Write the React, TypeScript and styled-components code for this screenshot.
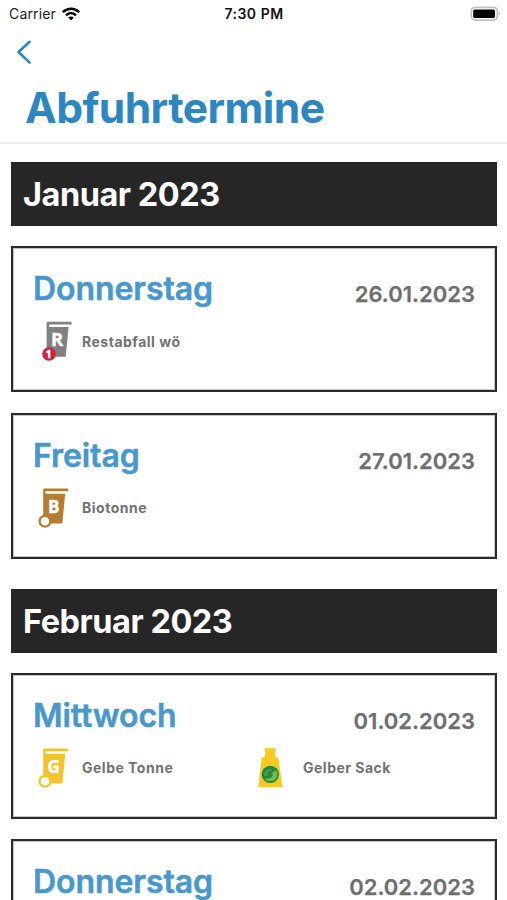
import React from "react";
import styled, { createGlobalStyle } from "styled-components";

const GlobalStyle = createGlobalStyle`
  * { box-sizing: border-box; }
  html, body { margin: 0; background: #fff; }
  body {
    height: 900px;
    overflow: hidden;
    font-family: Inter, "Liberation Sans", sans-serif;
    font-kerning: normal;
  }
  h1, h2, h3 { margin: 0; }
`;

const Screen = styled.div`
  width: 507px;
  height: 900px;
  overflow: hidden;
  background: #fff;
`;

const StatusBar = styled.div`
  display: grid;
  grid-template-columns: 1fr auto 1fr;
  align-items: center;
  height: 27px;
  padding: 0 6px 0 9px;
  color: #222;
`;

const Carrier = styled.div`
  display: flex;
  align-items: center;
  gap: 6px;
  font-size: 14px;
  letter-spacing: 0.15px;
`;

const Clock = styled.div`
  margin-left: -2px;
  font-size: 14px;
  font-weight: 600;
  letter-spacing: 0.5px;
  color: #111;
`;

const BatterySlot = styled.div`
  display: flex;
  justify-content: flex-end;
`;

const Header = styled.header`
  height: 117px;
  padding-top: 1px;
  border-bottom: 2px solid #ebebeb;
`;

const BackButton = styled.button`
  display: flex;
  align-items: center;
  height: 48px;
  padding: 0 0 0 16px;
  border: 0;
  background: none;
`;

const Title = styled.h1`
  padding-left: 25px;
  font-size: 42.5px;
  line-height: 64px;
  font-weight: 700;
  letter-spacing: -0.55px;
  color: #2b86c1;
`;

const Schedule = styled.main`
  padding: 18.4px 10px 0 11px;
`;

const Month = styled.section`
  display: flex;
  flex-direction: column;
  gap: 20.3px;
  margin-bottom: 30.1px;
`;

const MonthBanner = styled.h2`
  height: 63.6px;
  padding-left: 12px;
  background: #262626;
  color: #fff;
  font-size: 32.5px;
  line-height: 65px;
  font-weight: 700;
  letter-spacing: -0.48px;
`;

const Card = styled.article`
  height: 146.2px;
  padding: 21px 20px 0 20px;
  border: 2px solid #2b2c2c;
  box-shadow: inset 0 0 0 1px #c4c4c4;
`;

const CardHead = styled.div`
  display: flex;
  justify-content: space-between;
  height: 46px;
`;

const Weekday = styled.h3`
  font-size: 32px;
  line-height: 39px;
  font-weight: 600;
  letter-spacing: -0.08px;
  color: #4897cd;
  -webkit-text-stroke: 0.5px #4897cd;
`;

const DateText = styled.time`
  padding-top: 12px;
  font-size: 22px;
  line-height: 27px;
  font-weight: 600;
  letter-spacing: 0px;
  color: #6e6e6e;
  -webkit-text-stroke: 0.25px #6e6e6e;
`;

const Items = styled.div`
  display: grid;
  grid-template-columns: 221px 1fr;
`;

const Item = styled.div`
  display: flex;
  align-items: center;
  height: 52px;
  color: #727272;
  font-size: 14px;
  font-weight: 700;
  letter-spacing: 0.5px;

  svg { flex: none; margin-right: 3px; }
`;

const IconLetter = styled.text`
  font-family: "Open Sans", sans-serif;
  font-weight: 700;
  fill: #fff;
  stroke: #fff;
  stroke-width: 0.4px;
  text-anchor: middle;
  letter-spacing: 0;
`;

type Waste = "rest" | "bio" | "gelb" | "sack";

const binColor = { rest: "#818181", bio: "#b57c32", gelb: "#f3c32c" };
const binLetter = { rest: "R", bio: "B", gelb: "G" };

function Bin({ kind }: { kind: "rest" | "bio" | "gelb" }) {
  const color = binColor[kind];
  const rest = kind === "rest";
  return (
    <svg width="46" height="50" viewBox="0 0 46 50">
      <g transform={rest ? "translate(3.4 .5)" : "translate(0 .3)"}>
        <path d="M10.2 6.5Q10.2 5.2 11.5 5.2H34.2Q35.3 5.2 35.3 6.5V8H12.6V10.4H32.2L29.3 40.3H10.2Z" fill={color} />
        <IconLetter x="20.6" y="29.5" fontSize={rest ? 18.5 : 17}>{binLetter[kind]}</IconLetter>
      </g>
      {rest ? (
        <>
          <circle cx="16" cy="38" r="6.8" fill="#cc2443" />
          <IconLetter x="15.6" y="42" fontSize="11">1</IconLetter>
        </>
      ) : (
        <circle cx="12" cy="38.2" r="5.4" fill="#fff" stroke={color} strokeWidth="2.3" />
      )}
    </svg>
  );
}

function Sack() {
  return (
    <svg width="46" height="50" viewBox="0 0 46 50">
      <g transform="translate(-2 .3)">
        <path d="M12.2 5H24L22.8 9.2L23.7 14H26.3L30.4 43.8H6.3L9.7 14H12.5L13.4 9.2Z" fill="#f6ca20" />
        <circle cx="18.3" cy="31" r="8.6" fill="#238644" />
        <path d="M12.4 32.6C11.3 27.8 16.6 24.6 20.6 26.4L17.8 27.6C15.5 28.4 15 30.8 15.6 32.6Z" fill="#4aa34c" />
        <path d="M25.2 29.2C26.6 36.8 18.4 40.4 12.9 35.6L14.6 34.9C18.3 35.8 20.6 33.4 20.9 30.9L19.3 30.3L23.8 26.6Z" fill="#75bd4a" />
      </g>
    </svg>
  );
}

interface Pickup {
  day: string;
  date: string;
  items: { kind: Waste; label: string }[];
}

const months: { name: string; pickups: Pickup[] }[] = [
  {
    name: "Januar 2023",
    pickups: [
      { day: "Donnerstag", date: "26.01.2023", items: [{ kind: "rest", label: "Restabfall wö" }] },
      { day: "Freitag", date: "27.01.2023", items: [{ kind: "bio", label: "Biotonne" }] },
    ],
  },
  {
    name: "Februar 2023",
    pickups: [
      {
        day: "Mittwoch",
        date: "01.02.2023",
        items: [
          { kind: "gelb", label: "Gelbe Tonne" },
          { kind: "sack", label: "Gelber Sack" },
        ],
      },
      { day: "Donnerstag", date: "02.02.2023", items: [] },
    ],
  },
];

export default function App() {
  return (
    <Screen>
      <GlobalStyle />
      <StatusBar>
        <Carrier>
          Carrier
          <svg width="18" height="14" viewBox="0 0 18 14" fill="none" stroke="#000" strokeWidth="2.5">
            <path d="M.9 5.1C5.6.7 12.4.7 17.1 5.1" />
            <path d="M4 8.2C6.9 5.6 11.1 5.6 14 8.2" />
            <path d="M6.2 10.5Q9 8.4 11.8 10.5L9 13.4Z" fill="#000" stroke="none" />
          </svg>
        </Carrier>
        <Clock>7:30 PM</Clock>
        <BatterySlot>
          <svg width="31" height="16" viewBox="0 0 31 16">
            <rect x="1.3" y="1.3" width="26" height="12.8" rx="4" fill="#fff" stroke="#c2c2c2" strokeWidth="1.7" />
            <rect x="3.2" y="3.4" width="21.8" height="8.6" rx="1.5" fill="#000" />
            <path d="M28.7 5.5Q31 7.8 28.7 10Z" fill="#b5b5b5" />
          </svg>
        </BatterySlot>
      </StatusBar>
      <Header>
        <BackButton aria-label="Zurück">
          <svg width="16" height="26" viewBox="0 0 16 26" fill="none" stroke="#2b86c1" strokeWidth="2.6" strokeLinecap="round" strokeLinejoin="round">
            <path d="M13.6 2.8L2.5 13L13.6 23.6" />
          </svg>
        </BackButton>
        <Title>Abfuhrtermine</Title>
      </Header>
      <Schedule>
        {months.map((month) => (
          <Month key={month.name}>
            <MonthBanner>{month.name}</MonthBanner>
            {month.pickups.map((pickup) => (
              <Card key={pickup.date}>
                <CardHead>
                  <Weekday>{pickup.day}</Weekday>
                  <DateText>{pickup.date}</DateText>
                </CardHead>
                <Items>
                  {pickup.items.map((item) => (
                    <Item key={item.label}>
                      {item.kind === "sack" ? <Sack /> : <Bin kind={item.kind} />}
                      {item.label}
                    </Item>
                  ))}
                </Items>
              </Card>
            ))}
          </Month>
        ))}
      </Schedule>
    </Screen>
  );
}
